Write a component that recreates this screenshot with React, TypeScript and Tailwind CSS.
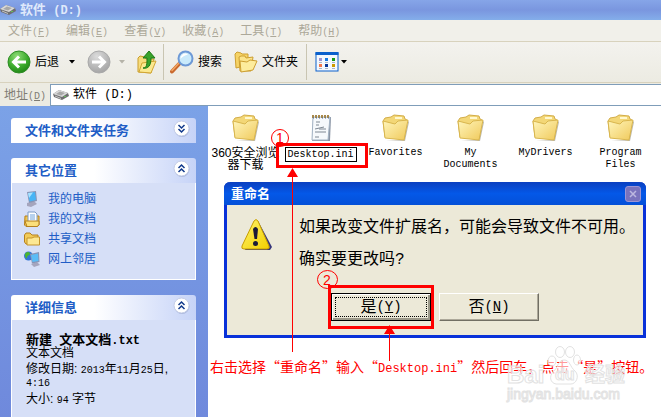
import React, { useState } from 'react';

const CJK = "font-['Liberation_Sans','Noto_Sans_CJK_SC',sans-serif]";

// Latin runs are monospaced, two letters to one Chinese character
const Mono: React.FC<{ children: React.ReactNode; className?: string }> = ({ children, className = 'text-[10px]' }) => (
  <span className={`font-['Liberation_Mono',monospace] leading-none ${className}`}>{children}</span>
);

const DriveIcon = () => (
  <svg width="16" height="12" viewBox="0 0 16 12">
    <path d="M0 5 L6 1 L15 4 L16 7 L9 11 L1 8Z" fill="#6f6f70" />
    <path d="M0 5 L6 1 L15 4 L9 8Z" fill="#d9d9d9" />
    <path d="M3 5 L7 2.500 L12 4 L8 6.500Z" fill="#a7a7a7" />
    <path d="M2 7 L8 9.500" stroke="#c4c4c4" />
    <rect x="11" y="7" width="2" height="1" fill="#62bf58" />
  </svg>
);

const CircleArrow: React.FC<{ forward?: boolean }> = ({ forward }) => (
  <svg width="24" height="24" viewBox="0 0 24 24">
    <defs>
      <radialGradient id={forward ? 'fwd' : 'back'} cx="40%" cy="25%" r="80%">
        <stop offset="0" stopColor={forward ? '#dcdcdc' : '#8fdc78'} />
        <stop offset="0.6" stopColor={forward ? '#b8b8b8' : '#3cab2c'} />
        <stop offset="1" stopColor={forward ? '#a2a2a2' : '#1d8214'} />
      </radialGradient>
    </defs>
    <circle cx="12" cy="12" r="11" fill={`url(#${forward ? 'fwd' : 'back'})`} stroke={forward ? '#a9a9a9' : '#2e8c25'} strokeWidth="1" />
    <path
      d={forward ? 'M5 12H17M12 6.500L17.500 12L12 17.500' : 'M19 12H7M12 6.500L6.500 12L12 17.500'}
      fill="none"
      stroke="#fff"
      strokeWidth="3"
    />
  </svg>
);

const Caret: React.FC<{ color: string }> = ({ color }) => (
  <svg width="6" height="4" viewBox="0 0 6 4">
    <path d="M0 0H6L3 3.500Z" fill={color} />
  </svg>
);

const UpFolderIcon = () => (
  <svg width="20" height="24" viewBox="0 0 20 24">
    <path d="M1 8 L3 6 L8 7 L9 9 L17 9 L14 23 L1 22Z" fill="#f7dc7c" stroke="#c99d2c" />
    <path d="M5 13 L19 11 L14 23 L2 22Z" fill="#fbe88f" stroke="#d1a634" />
    <path d="M6 18 C10 18 10 14 10 8 L6 8 L12 1 L18 8 L14 8 C14 16 11 19 6 18Z" fill="#38a32b" stroke="#1c7815" />
  </svg>
);

const SearchIcon = () => (
  <svg width="24" height="24" viewBox="0 0 24 24">
    <path d="M9 14 L2 21.500" stroke="#c9682d" strokeWidth="4" strokeLinecap="round" />
    <path d="M8.500 13.500 L2 20.500" stroke="#f2a865" strokeWidth="1.500" strokeLinecap="round" />
    <circle cx="15.500" cy="8.500" r="7" fill="#c9eafb" stroke="#6d99d6" strokeWidth="2" />
    <path d="M10.500 9 A5 5 0 0 1 16 3.500 L18 4.500 C15 5 12 7 10.500 9Z" fill="#fff" />
  </svg>
);

const FoldersIcon = () => (
  <svg width="24" height="22" viewBox="0 0 24 22">
    <path d="M1 3 L3 1 L7 2 L8 3 L14 3 V14 L2 17Z" fill="#f6d365" stroke="#cd9f31" />
    <path d="M5 6 L7 5 L11 5 L12 7 L19 6 L17 20 L6 20Z" fill="#fbe48a" stroke="#cd9f31" />
    <path d="M6 10 L13 11 L16 9 L23 10 L19 19 L7 21Z" fill="#fdec9c" stroke="#cd9f31" />
  </svg>
);

const ViewsIcon = () => (
  <svg width="24" height="20" viewBox="0 0 24 20">
    <rect x="1" y="1" width="22" height="18" fill="#f4f8fd" stroke="#0a60cc" strokeWidth="1" />
    <rect x="0.500" y="0" width="23" height="3" fill="#0a60cc" />
    {[
      ['#9d93d2', 4, 6], ['#1a7ae0', 10, 6], ['#149a18', 17, 6],
      ['#f3774a', 4, 12], ['#0a3796', 10, 12], ['#cc9a00', 17, 12],
    ].map(([fill, x, y]) => (
      <g key={`${x}-${y}`}>
        <rect x={x} y={y} width="3" height="3" fill={String(fill)} />
        <rect x={x} y={Number(y) + 4} width="3" height="1" fill="#a9b5c6" />
      </g>
    ))}
  </svg>
);

const FolderIcon = () => (
  <svg width="28" height="28" viewBox="0 0 28 28">
    <defs>
      <linearGradient id="folder" x1="0" y1="0" x2="1" y2="1">
        <stop offset="0" stopColor="#fff6bd" />
        <stop offset="1" stopColor="#f0c95a" />
      </linearGradient>
    </defs>
    <path d="M4 26 L23 27 L27 8 L26 7 L22 26Z" fill="#8f8a78" opacity="0.6" />
    <path d="M1 7 L3 4 L9 3 L12 1 L22 2 L23 5 L25 6 L22 25 L3 23Z" fill="#f3d777" stroke="#d3ad48" />
    <path d="M13 4 L20 4" stroke="#fff8cf" strokeWidth="2" />
    <path d="M1 7 L13 10 L16 7 L26 6 L22 26 L3 24Z" fill="url(#folder)" stroke="#d9b64e" />
  </svg>
);

const NoteIcon = () => (
  <svg width="22" height="28" viewBox="0 0 22 28">
    <path d="M3 3 H21 L20 27 H2Z" fill="#8b95a5" />
    <path d="M3 3 H20 L18 26 H2Z" fill="#f6f9fc" stroke="#a3b3c4" />
    <path d="M2 2.500H20" stroke="#a8894a" strokeWidth="3" strokeDasharray="2 1" />
    <path d="M3 4H20" stroke="#476a9c" strokeDasharray="1 2" />
    <path d="M6 8H10M6 11H9M5 15L14 13M5 18H16M9 15H16M5 23H9" stroke="#7e8893" />
  </svg>
);

const ComputerIcon = () => (
  <svg width="16" height="16" viewBox="0 0 16 16">
    <path d="M3 12 L10 10 L13 13 L7 16 L3 15Z" fill="#a5a5bd" />
    <path d="M3 1 L12 0 L13 10 L5 12Z" fill="#8a94b4" />
    <path d="M4 2 L11 1 L12 9 L5.500 10.500Z" fill="#48b4f5" />
    <path d="M4 2 L9 1.500 L5 7Z" fill="#a9e2ff" />
  </svg>
);

const DocumentsIcon = () => (
  <svg width="16" height="16" viewBox="0 0 16 16">
    <path d="M1 5 H15 V14 L13 15.500 H2 L0.500 14Z" fill="#f3c750" stroke="#b5801f" />
    <path d="M4 1 H11 L13 3 V12 H4Z" fill="#fff" stroke="#7d9bc6" />
    <path d="M6 4H11M6 6H11M6 8H11" stroke="#6fa3dd" />
    <path d="M1 10 H15 V14 L13 15.500 H3Z" fill="#fbdf7b" stroke="#b5801f" />
  </svg>
);

const SharedIcon = () => (
  <svg width="16" height="14" viewBox="0 0 16 14">
    <path d="M0.500 3 L2 1 H6 L8 3 H14 V12 H2 L0.500 10Z" fill="#f2cb58" stroke="#b5801f" />
    <path d="M3 13 V6 H8 L10 5 H15.500 V13Z" fill="#fde893" stroke="#c5942b" />
  </svg>
);

const NetworkIcon = () => (
  <svg width="16" height="16" viewBox="0 0 16 16">
    <circle cx="4.500" cy="5" r="4.500" fill="#3476d4" />
    <path d="M1 3 C3 0 6 1 6 3 C5 5 3 4 3 7 C2 8 1 6 1 3Z" fill="#4bb52f" />
    <path d="M7 13 L13 11 L16 14 L10 16Z" fill="#a5a5bd" />
    <path d="M6 3 L15 1 L15.500 11 L8 12.500Z" fill="#8a94b4" />
    <path d="M7 4 L14 2.500 L14.500 10 L8.500 11Z" fill="#5bbcf6" />
  </svg>
);

const WarningIcon = () => (
  <svg width="32" height="32" viewBox="0 0 32 32">
    <defs>
      <linearGradient id="warn" x1="0" y1="0" x2="1" y2="1">
        <stop offset="0" stopColor="#fff46a" />
        <stop offset="1" stopColor="#f2cf00" />
      </linearGradient>
    </defs>
    <path d="M17 2 L31 28 L29 31 H4Z" fill="#35357a" />
    <path d="M13 2 Q15 -1 17 2 L28 27 Q29 30 26 30 H3 Q0 30 1 27Z" fill="url(#warn)" stroke="#c79d00" />
    <path d="M12 10 Q14.500 6 17 10 L16 20 H13.500Z" fill="#1b1b38" />
    <circle cx="14.500" cy="24.500" r="2.500" fill="#1b1b38" />
  </svg>
);

const menus = [
  ['文件', 'F'], ['编辑', 'E'], ['查看', 'V'], ['收藏', 'A'], ['工具', 'T'], ['帮助', 'H'],
];

const places = [
  { label: '我的电脑', icon: <ComputerIcon /> },
  { label: '我的文档', icon: <DocumentsIcon /> },
  { label: '共享文档', icon: <SharedIcon /> },
  { label: '网上邻居', icon: <NetworkIcon /> },
];

interface PanelProps {
  title: string;
  open?: boolean;
  children?: React.ReactNode;
}

const Panel: React.FC<PanelProps> = ({ title, open = false, children }) => {
  const [expanded, setExpanded] = useState(open);
  return (
    <section>
      <button
        onClick={() => setExpanded(!expanded)}
        aria-expanded={expanded}
        className="flex h-[25px] w-full items-center justify-between rounded-t-[3px] bg-linear-to-r from-white from-45% to-[#c6d3f7] pr-1.5 pl-3.5 text-[13px] font-bold text-[#215dc6]"
      >
        {title}
        <svg width="17" height="17" viewBox="0 0 17 17" className="-translate-y-0.5">
          <circle cx="9" cy="9.500" r="7.500" fill="#a9b6dc" />
          <circle cx="8.500" cy="8.500" r="7.500" fill="#fff" stroke="#c3cce6" />
          <path
            d={expanded ? 'M5.500 8L8.500 5L11.500 8M5.500 12L8.500 9L11.500 12' : 'M5.500 5L8.500 8L11.500 5M5.500 9L8.500 12L11.500 9'}
            fill="none"
            stroke="#123a8c"
            strokeWidth="1.500"
          />
        </svg>
      </button>
      {expanded && children && <div className="border border-t-0 border-white bg-[#d6dff7]">{children}</div>}
    </section>
  );
};

const FileItem: React.FC<{ icon: React.ReactNode; latin?: boolean; children: React.ReactNode }> = ({ icon, latin, children }) => (
  <div className="flex w-[75px] flex-col items-center gap-[5px] text-center whitespace-nowrap">
    {icon}
    <div className={latin ? "font-['Liberation_Mono',monospace] text-[10px] leading-3" : 'leading-3'}>{children}</div>
  </div>
);

const RenameDialog = () => (
  <div
    role="dialog"
    aria-labelledby="dialog-title"
    className="absolute top-[76px] left-4 w-[422px] rounded-t-md border-[3px] border-t-0 border-[#0831d9] bg-[#ece9d8]"
  >
    <div className="-mx-[3px] flex h-[23px] items-center justify-between rounded-t-md bg-linear-to-b from-[#0a3fc0] via-[#0458e8] to-[#0450d8] pr-[5px] pl-[7px]">
      <h2 id="dialog-title" className="text-[13px] font-bold text-white">重命名</h2>
      <button aria-label="关闭" className="flex size-4 items-center justify-center rounded-[3px] border border-[#9c95d4] bg-[#7a73bd]">
        <svg width="8" height="8" viewBox="0 0 8 8">
          <path d="M1 1L7 7M7 1L1 7" stroke="#bdb8e0" strokeWidth="1.500" />
        </svg>
      </button>
    </div>
    <div className="flex gap-[26px] pt-1.5 pl-3.5 text-base leading-8 text-black">
      <div className="pt-2">
        <WarningIcon />
      </div>
      <p className="whitespace-nowrap">
        如果改变文件扩展名，可能会导致文件不可用。
        <br />
        确实要更改吗<Mono className="text-base">?</Mono>
      </p>
    </div>
    <div className="flex justify-center gap-2 pt-[18px] pb-3.5 text-base text-black">
      <button className="h-7 w-[100px] border border-black bg-[#ece9d8] p-px shadow-[inset_1px_1px_#fff,inset_-2px_-2px_#9b9889]">
        <span className="mx-0.5 flex h-5 items-center justify-center border border-dotted border-black">
          是<Mono className="text-sm">(<u>Y</u>)</Mono>
        </span>
      </button>
      <button className="flex h-7 w-[100px] items-center justify-center border border-t-white border-r-[#716f64] border-b-[#716f64] border-l-white bg-[#ece9d8] shadow-[inset_-1px_-1px_#aca899]">
        否<Mono className="text-sm">(<u>N</u>)</Mono>
      </button>
    </div>
  </div>
);

// Red boxes, numbers and arrows over the steps
const Annotations = () => (
  <svg width="453" height="260" viewBox="208 106 453 260" className="pointer-events-none absolute top-0 left-0">
    <g fill="none" stroke="#f00">
      <rect x="277.500" y="144.500" width="89" height="22" strokeWidth="3" />
      <rect x="329.500" y="286.500" width="103" height="41" strokeWidth="3" />
      <ellipse cx="280" cy="138" rx="8.500" ry="8.500" />
      <ellipse cx="327.500" cy="279.500" rx="10" ry="9" />
      <path d="M292.500 176V352M389.500 332V361" />
    </g>
    <path d="M292.500 168L298 177H287ZM389.500 325L395 334H384Z" fill="#f00" />
    <g fill="#f00" fontSize="14" fontFamily="Liberation Sans, sans-serif" textAnchor="middle">
      <text x="280" y="143">1</text>
      <text x="327" y="285">2</text>
    </g>
  </svg>
);

const Watermark = () => (
  <div className="pointer-events-none absolute top-[239px] left-[299px] w-[118px] font-['Liberation_Sans','Noto_Sans_CJK_SC',sans-serif] font-bold whitespace-nowrap text-white/60 [-webkit-text-stroke:1px_#e2e2e2]">
    <svg width="34" height="40" viewBox="0 0 34 40" className="absolute top-0 left-10" fill="#fff" fillOpacity="0.6" stroke="#e2e2e2">
      <ellipse cx="5" cy="16" rx="4" ry="5" />
      <ellipse cx="13" cy="7" rx="4.500" ry="5.500" />
      <ellipse cx="23" cy="7" rx="4.500" ry="5.500" />
      <ellipse cx="30" cy="15" rx="3.500" ry="5" />
      <path d="M17 15C23 15 23 22 28 26C33 31 29 39 24 39H9C3 38 2 31 6 27C11 23 11 15 17 15Z" />
    </svg>
    <div className="relative flex items-end justify-between pt-[18px] leading-6">
      <span className="text-2xl leading-6">Bai</span>
      <span className="text-base leading-6">du</span>
      <span className="text-[20px]">经验</span>
    </div>
    <div className="text-sm leading-3.5 font-normal">jingyan.baidu.com</div>
  </div>
);

export default function App() {
  const [path, setPath] = useState('软件 (D:)');
  const [fileName, setFileName] = useState('Desktop.ini');

  return (
    <div className={`flex min-h-screen flex-col overflow-hidden bg-white text-xs text-black ${CJK}`}>
      <header className="flex h-5 items-center gap-1 bg-linear-to-b from-[#86a5e8] via-[#7a96df] to-[#84aeea] text-[13px] font-bold text-[#dfe9fb]">
        <DriveIcon />
        <h1 className="whitespace-pre">软件<Mono className="text-xs"> (D:)</Mono></h1>
      </header>

      <nav className="flex h-[22px] items-center gap-4 border-b border-[#d8d2bd] bg-[#f1f0ea] px-2 text-[#aca899]">
        {menus.map(([label, key]) => (
          <button key={key} className="whitespace-nowrap">
            {label}<Mono>(<u>{key}</u>)</Mono>
          </button>
        ))}
      </nav>

      <div className="flex h-[41px] items-center border-b border-[#d8d2bd] bg-linear-to-b from-[#f3f2ee] to-[#ecebe2] pl-[7px]">
        <button className="flex items-center gap-1">
          <CircleArrow />
          后退
        </button>
        <button aria-label="后退历史" className="ml-2.5"><Caret color="#000" /></button>
        <button aria-label="前进" className="ml-3"><CircleArrow forward /></button>
        <button aria-label="前进历史" className="ml-2"><Caret color="#b5b3a8" /></button>
        <button aria-label="向上" className="ml-3"><UpFolderIcon /></button>
        <div className="mx-1.5 h-9 w-px bg-[#c9c5b2]" />
        <button className="flex items-center gap-1">
          <SearchIcon />
          搜索
        </button>
        <button className="ml-3 flex items-center gap-1">
          <FoldersIcon />
          文件夹
        </button>
        <div className="mx-2 h-9 w-px bg-[#c9c5b2]" />
        <button aria-label="查看" className="flex items-center gap-0.5">
          <ViewsIcon />
          <Caret color="#000" />
        </button>
      </div>

      <div className="flex h-[23px] items-center gap-1 bg-[#ecebe2] pl-1 text-[#7f7c73]">
        <label htmlFor="address" className="w-[42px] whitespace-nowrap">
          地址<Mono>(<u>D</u>)</Mono>
        </label>
        <div className="flex h-[22px] flex-1 items-center gap-1 border border-r-0 border-[#7f9db9] bg-white pl-0.5">
          <DriveIcon />
          <input
            id="address"
            value={path}
            onChange={(e) => setPath(e.target.value)}
            className="min-w-0 flex-1 font-['Liberation_Mono','Noto_Sans_CJK_SC',monospace] text-xs text-black outline-none"
          />
        </div>
      </div>

      <div className="flex flex-1">
        <aside className="flex w-52 shrink-0 flex-col gap-[15px] bg-linear-to-b from-[#7ba2e7] to-[#6f89dc] px-3 pt-3 pl-[11px]">
          <Panel title="文件和文件夹任务" />
          <Panel title="其它位置" open>
            <ul className="pt-1.5 pb-2.5 pl-3">
              {places.map((place) => (
                <li key={place.label}>
                  <a href="#" className="flex h-5 items-center gap-2 text-[#215dc6]">
                    {place.icon}
                    {place.label}
                  </a>
                </li>
              ))}
            </ul>
          </Panel>
          <Panel title="详细信息" open>
            <div className="pt-3.5 pr-2 pb-3 pl-3.5 leading-3">
              <h3 className="text-[13px] leading-3 font-bold whitespace-pre">新建<Mono className="text-xs"> </Mono>文本文档<Mono className="text-xs">.txt</Mono></h3>
              <p>文本文档</p>
              <p className="pt-1">
                修改日期: <Mono>2013</Mono>年<Mono>11</Mono>月<Mono>25</Mono>日,
                <br />
                <Mono>4:16</Mono>
              </p>
              <p className="pt-1">大小: <Mono>94</Mono> 字节</p>
            </div>
          </Panel>
        </aside>

        <main className="relative min-w-0 flex-1 bg-white">
          <div className="flex flex-wrap pt-2">
            <FileItem icon={<FolderIcon />}>360安全浏览<br />器下载</FileItem>
            <FileItem icon={<NoteIcon />}>
              <input
                aria-label="文件名"
                value={fileName}
                onChange={(e) => setFileName(e.target.value)}
                className="block h-[15px] w-[72px] border border-black bg-white text-center font-['Liberation_Mono',monospace] text-[10px] outline-none"
              />
            </FileItem>
            <FileItem latin icon={<FolderIcon />}>Favorites</FileItem>
            <FileItem latin icon={<FolderIcon />}>My<br />Documents</FileItem>
            <FileItem latin icon={<FolderIcon />}>MyDrivers</FileItem>
            <FileItem latin icon={<FolderIcon />}>Program<br />Files</FileItem>
          </div>

          <RenameDialog />
          <Annotations />
          <p className="absolute top-[250px] left-0.5 font-['Noto_Sans_CJK_SC',sans-serif] text-sm whitespace-nowrap text-[#f00]">
            右击选择“重命名”输入“<Mono className="text-xs">Desktop.ini</Mono>”然后回车，点击“是”按钮。
          </p>
          <Watermark />
        </main>
      </div>
    </div>
  );
}
